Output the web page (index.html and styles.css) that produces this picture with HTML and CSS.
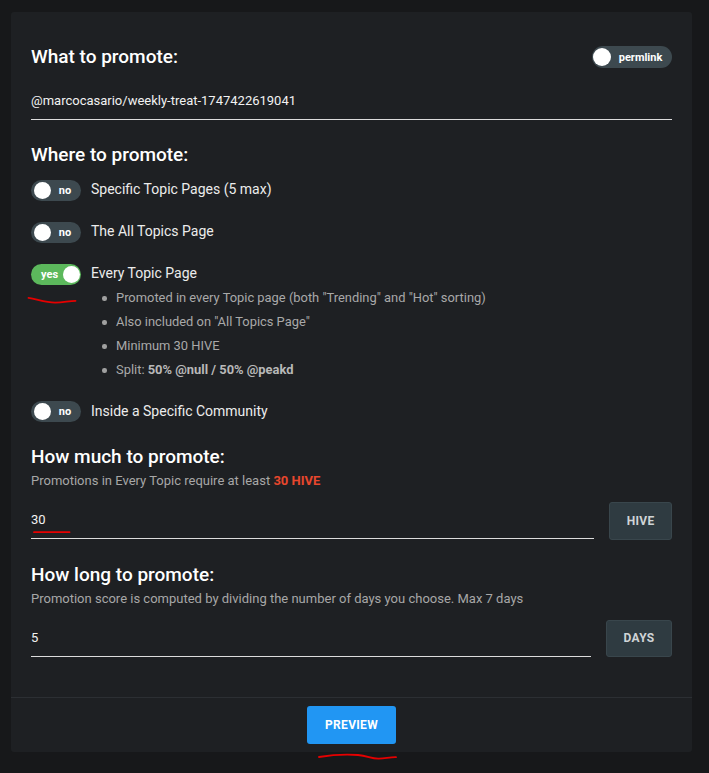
FILE: index.html
```html
<!DOCTYPE html>
<html lang="en">
<head>
<meta charset="utf-8">
<title>Promote</title>
<link rel="stylesheet" href="styles.css">
</head>
<body>
<div class="card">
  <div class="card-body">
    <div class="head-row">
      <h2 class="heading">What to promote:</h2>
      <div class="pill pill-off pill-wide"><span class="knob"></span><span class="pill-text">permlink</span></div>
    </div>
    <div class="field field-top"><span class="field-value">@marcocasario/weekly-treat-1747422619041</span></div>

    <h2 class="heading h-where">Where to promote:</h2>
    <div class="options">
      <div class="option"><div class="pill pill-off"><span class="knob"></span><span class="pill-text">no</span></div><span class="option-label">Specific Topic Pages (5 max)</span></div>
      <div class="option"><div class="pill pill-off"><span class="knob"></span><span class="pill-text">no</span></div><span class="option-label">The All Topics Page</span></div>
      <div class="option"><div class="pill pill-on"><span class="pill-text">yes</span><span class="knob"></span></div><span class="option-label">Every Topic Page</span></div>
    </div>
    <ul class="details">
      <li>Promoted in every Topic page (both "Trending" and "Hot" sorting)</li>
      <li>Also included on "All Topics Page"</li>
      <li>Minimum 30 HIVE</li>
      <li>Split: <b>50% @null / 50% @peakd</b></li>
    </ul>
    <div class="option option-last"><div class="pill pill-off"><span class="knob"></span><span class="pill-text">no</span></div><span class="option-label">Inside a Specific Community</span></div>

    <h2 class="heading h-section">How much to promote:</h2>
    <p class="hint">Promotions in Every Topic require at least <b class="warn">30 HIVE</b></p>
    <div class="input-row">
      <div class="field"><span class="field-value">30</span></div>
      <button class="unit-btn">HIVE</button>
    </div>

    <h2 class="heading h-section">How long to promote:</h2>
    <p class="hint">Promotion score is computed by dividing the number of days you choose. Max 7 days</p>
    <div class="input-row">
      <div class="field"><span class="field-value">5</span></div>
      <button class="unit-btn">DAYS</button>
    </div>
  </div>
  <div class="card-footer">
    <button class="preview-btn">PREVIEW</button>
  </div>
</div>

<svg class="marks" width="709" height="773" viewBox="0 0 709 773" xmlns="http://www.w3.org/2000/svg">
  <path d="M28.5 297.8 C38 299.5 46 302.5 55 302.6 C63 302.7 69 300.8 75.5 300.8" />
  <path d="M34 532.2 L69.5 532.2" />
  <path d="M319 757 C330 755.2 345 754 358 755 C368 756 372 759 379 758.6 C386 758.2 391 757 396 757.2" />
</svg>
</body>
</html>
```
FILE: styles.css
```css
* { box-sizing: border-box; }
html, body { margin: 0; padding: 0; }
body {
  background: #17181a;
  font-family: Roboto, "Liberation Sans", sans-serif;
  color: #e8e8e8;
  width: 709px;
  height: 773px;
  position: relative;
  overflow: hidden;
}
.card {
  margin: 12px 17px 0 11px;
  background: #1e2023;
  border-radius: 3px;
}
.card-body {
  padding: 33px 20px 40px 20px;
  display: flex;
  flex-direction: column;
}
.heading {
  margin: 0;
  font-size: 19px;
  line-height: 24px;
  font-weight: 500;
  color: #ffffff;
}
.head-row {
  display: flex;
  align-items: center;
  justify-content: space-between;
  height: 24px;
}
.field {
  flex: 1;
  border-bottom: 1px solid #dcdcdc;
  padding: 3px 0 8px 0;
  line-height: 20px;
  font-size: 13px;
  color: #f2f2f2;
}
.field-top { margin-top: 19px; }

.h-where { margin-top: 23px; }
.options {
  margin-top: 12.5px;
  display: flex;
  flex-direction: column;
  gap: 21px;
}
.option {
  display: flex;
  align-items: center;
  height: 21px;
}
.option-last { margin-top: 19px; }
.option-label {
  margin-left: 10px;
  font-size: 14px;
  line-height: 18px;
  margin-top: -2px;
  color: #ececec;
}

.pill {
  display: flex;
  align-items: center;
  width: 50px;
  height: 21px;
  border-radius: 11px;
  padding: 0 2px 0 3px;
  font-size: 11px;
  font-weight: 700;
  color: #ffffff;
}
.pill-off { background: #3d494f; }
.pill-on { background: #5cb85c; padding: 0 2px 0 10px; }
.pill-wide { width: 80px; height: 22px; padding: 0 2px 0 1px; }
.knob {
  width: 17px;
  height: 17px;
  border-radius: 50%;
  background: #ffffff;
  flex: none;
}
.pill-wide .knob { width: 18px; height: 18px; }
.pill-text { flex: 1; text-align: center; }
.pill-on .pill-text { flex: none; margin-right: 5px; }
.pill-on .knob { margin-left: auto; }

.details {
  margin: 1.5px 0 0 0;
  padding: 0 0 0 85px;
  list-style: none;
  font-size: 12.9px;
  line-height: 24px;
  color: #a9a9a9;
}
.details li { position: relative; }
.details li::before {
  content: "";
  position: absolute;
  left: -14px;
  top: 10px;
  width: 4.5px;
  height: 4.5px;
  border-radius: 50%;
  background: #a0a0a0;
}
.details b { font-weight: 700; color: #b8b8b8; }

.h-section { margin-top: 23px; }
.hint {
  margin: 4px 0 0 0;
  font-size: 13px;
  line-height: 16px;
  color: #a7a7a7;
}
.warn { color: #e8472d; font-weight: 700; }

.input-row {
  margin-top: 13px;
  display: flex;
  align-items: flex-end;
  gap: 15px;
}
.input-row .field { margin-bottom: 0.5px; }
.unit-btn {
  height: 37.5px;
  padding: 0 16.5px;
  background: #2f3b41;
  border: 1px solid #39464c;
  border-radius: 3px;
  color: #cfd4d6;
  font-family: inherit;
  font-size: 12px;
  font-weight: 700;
  letter-spacing: 0.3px;
}

.card-footer {
  border-top: 1px solid #2c2f33;
  padding: 8px 0 8px 0;
  display: flex;
  justify-content: center;
}
.preview-btn {
  width: 89px;
  height: 38px;
  background: #2196f3;
  border: none;
  border-radius: 3px;
  color: #ffffff;
  font-family: inherit;
  font-size: 12px;
  font-weight: 700;
  letter-spacing: 0.3px;
}

.marks {
  position: absolute;
  left: 0;
  top: 0;
  pointer-events: none;
  fill: none;
  stroke: #e60000;
  stroke-width: 1.8;
  stroke-linecap: round;
}
```
